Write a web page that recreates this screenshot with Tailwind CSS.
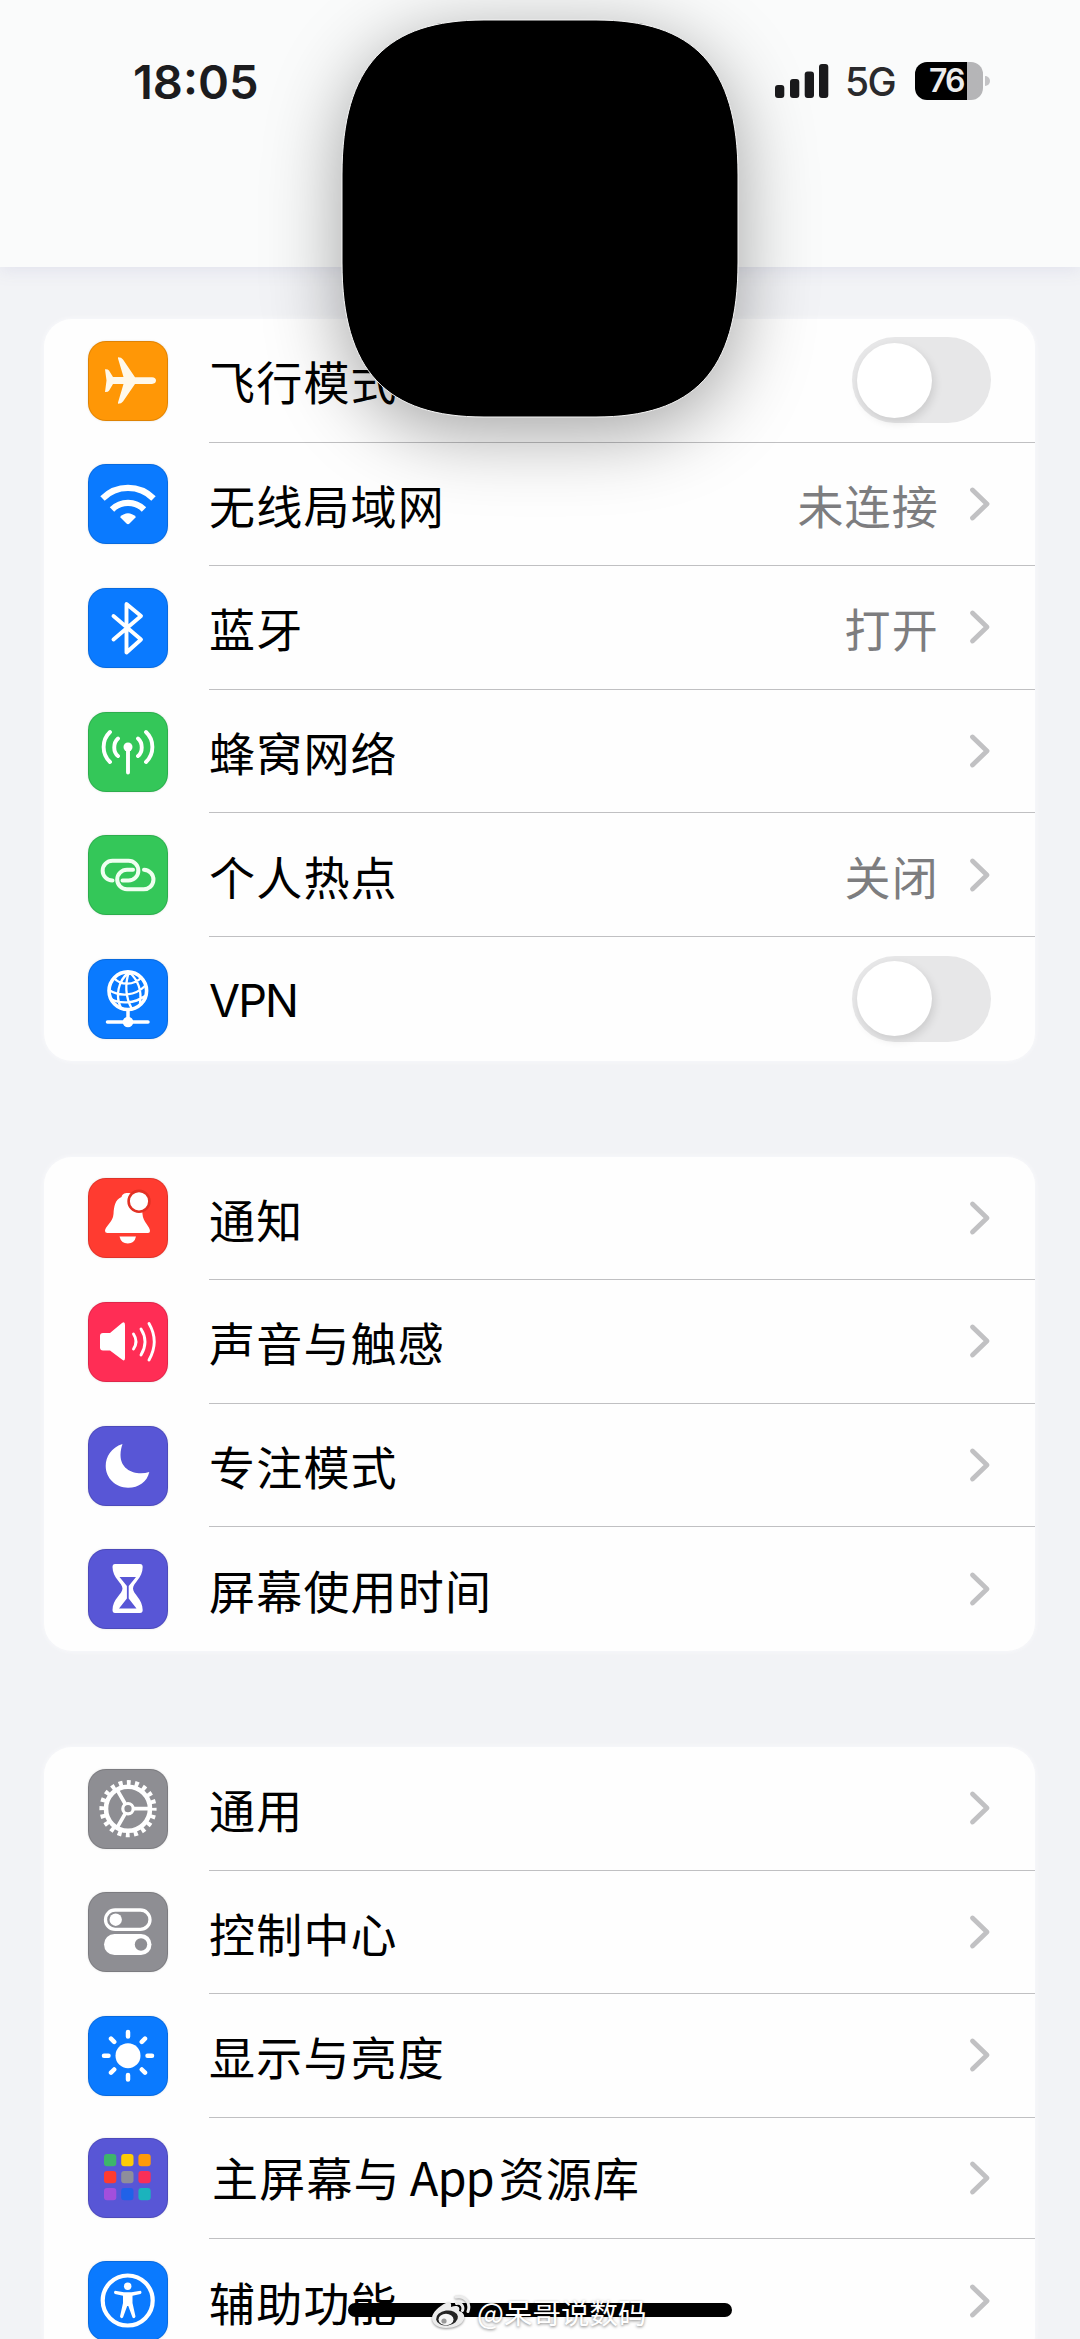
<!DOCTYPE html>
<html lang="zh-CN">
<head>
<meta charset="utf-8">
<title>设置</title>
<script src="https://cdn.jsdelivr.net/npm/@tailwindcss/browser@4"></script>
</head>
<body class="bg-[#f2f3f6]">
<svg class="hidden">
  <symbol id="chev" viewBox="0 0 24 38"><path d="M4.5 5L19 19L4.5 33" fill="none" stroke="#c1c1c3" stroke-width="4.8" stroke-linecap="round" stroke-linejoin="round"/></symbol>
</svg>
<div id="screen" class="relative w-[1080px] h-[2339px] overflow-hidden bg-[#f2f3f6] text-black font-['Inter','Noto_Sans_CJK_SC',sans-serif]">
  <header class="h-[267px] bg-[#fafbfb] shadow-[0_4px_14px_rgba(225,226,236,0.9)]">
    <div class="flex items-center h-[162px] pl-[133px] pr-[90px]">
      <div class="text-[47px] leading-none font-semibold text-[#1c1c1e]">18:05</div>
      <div class="ml-auto flex items-center">
        <svg class="w-[54px] h-[36px]" viewBox="0 0 54 36" fill="#1a1a1c"><rect x="0" y="22" width="9.3" height="13" rx="3"/><rect x="15" y="16" width="9.3" height="19" rx="3"/><rect x="29.7" y="8.500" width="9.3" height="26.500" rx="3"/><rect x="44" y="1" width="9.3" height="34" rx="3"/></svg>
        <div class="ml-[16px] w-[53px] whitespace-nowrap text-[39px] leading-none font-medium tracking-[-1.5px] text-[#2a2a2c]">5G</div>
        <div class="relative ml-[17px] flex h-[38px] w-[68px] items-center rounded-[12px] bg-linear-to-r from-black from-76% to-[#b5b5b7] to-76% pl-[14px] text-[32px] leading-none font-semibold tracking-[-2px] text-[#ececec]">76</div>
        <div class="ml-[2px] h-[10px] w-[5px] rounded-r-full bg-[#c4c4c6]"></div>
      </div>
    </div>
  </header>
  <main id="list" class="mt-[52px] ml-[44px] flex w-[991px] flex-col gap-[96px]"></main>

  <svg class="absolute left-[341px] top-[19px] h-[399px] w-[398px] overflow-visible drop-shadow-[0_16px_38px_rgba(0,0,0,0.36)]" viewBox="-1 -1 398 399"><path d="M0 155C0 45 45 0 142 0H254C351 0 396 45 396 155V242C396 352 351 397 254 397H142C45 397 0 352 0 242Z" stroke="#f4f4f4" stroke-width="1"/></svg>
  <div class="absolute left-[348px] top-[2303px] h-[14px] w-[384px] rounded-full bg-black"></div>
  <div class="absolute left-[431px] top-[2292px] flex items-center whitespace-nowrap text-[28.5px] leading-[40px] text-white [text-shadow:0_1px_3px_rgba(0,0,0,0.5)] font-['Noto_Sans_CJK_SC',sans-serif]">
    <svg class="mr-[6px] h-[38px] w-[40px] drop-shadow-[0_1px_1px_rgba(0,0,0,0.4)]" viewBox="0 0 40 38"><path d="M15 10C18 8 21 9 20 14C25 12 30 13 28 18C32 19 34 22 33 26C31 32 23 35 15 35C7 35 1 31 1 25C1 20 8 13 15 10Z" fill="#ececec"/><ellipse cx="16" cy="25" rx="11" ry="7.500" fill="#222" transform="rotate(-8 16 25)"/><ellipse cx="15" cy="26.500" rx="7.500" ry="5.800" fill="#f4f4f4"/><circle cx="13" cy="28" r="2.600" fill="#999"/><path d="M25.500 10.500C30 9.500 33 13 31.500 17.500M25 4C34 2 40 10 37 18.500" fill="none" stroke="#ececec" stroke-width="3" stroke-linecap="round"/></svg>
    <span>@呆哥说数码</span>
  </div>
</div>
<script>
const W = 'fill="none" stroke="#fff" stroke-linecap="round" stroke-linejoin="round"';
const icons = {
  plane: `<path fill="#fff8ea" d="M64 36.200H47L35 18.500Q33.500 16.300 30 16.300V17.500L35.500 36H25L21 29.500Q20 28 17 28.200L18.500 39.500L17 51Q20 51.200 21 49.700L25 43H35.500L30 61.500V62.700Q33.500 62.700 35 60.500L47 43H64Q68 42.500 68 39.500Q68 36.600 64 36.200Z"/>`,
  wifi: `<path fill="none" stroke="#fff" stroke-width="6.200" d="M14.500 34.500A36 36 0 0 1 65.500 34.500"/><path fill="none" stroke="#fff" stroke-width="6.200" d="M24 45.500A22.500 22.500 0 0 1 56 45.500"/><path fill="#fff" d="M32 53Q40 45.500 48 53L41.500 59.500Q40 61 38.500 59.500Z"/>`,
  bt: `<path ${W} stroke-width="3.900" d="M25.500 28L53 51.500L38.500 64.500V16L53 28L25.500 51.500"/>`,
  cell: `<path ${W} stroke-width="3.900" d="M40 35V60.500M30 26.500C25 31 25 40 30 44M22 20C13.500 28 13.500 42 22 50M50 26.500C55 31 55 40 50 44M58 20C66.500 28 66.500 42 58 50"/><circle cx="40" cy="35" r="4.500" fill="#fff"/>`,
  link: `<path fill="none" stroke="#effff0" stroke-linecap="round" stroke-width="4" d="M24.500 45.500A9.850 9.850 0 0 1 24.500 25.800H40.500A9.850 9.850 0 0 1 40.500 45.500H34.500M45 34.700H39A9.800 9.800 0 0 0 39 54.300H55.300A9.800 9.800 0 0 0 56 34.700"/>`,
  vpn: `<g ${W}><circle cx="39.800" cy="31.700" r="18.800" stroke-width="3.600"/><path stroke-width="2.300" d="M41 13C30 22 27 37 33 49M41 13C37 24 37 38 44 50M41 13C49 20 54 31 52 44M26 19C33 27 46 26 53 19M21 31C32 38 47 37 57 27M23 40C32 45 46 45 57 37"/><path stroke-width="3.500" d="M40 51V60M19.500 63H60"/></g><circle cx="40" cy="63" r="5.300" fill="#fff"/>`,
  bell: `<path fill="#fff" d="M38.500 15C35 15.500 34 17 33.500 19C27 22 26 28 25.500 36C25 44.500 17 48 17 53Q17 55 19.500 55H60Q62 55 62 53C62 48 55 44.500 54.500 36L52 18L41 15ZM31.500 58.500H48Q46.500 65.500 39.800 65.500T31.500 58.500Z"/><circle cx="51" cy="23.300" r="10.400" fill="#fff" stroke="#e23124" stroke-width="2.600"/>`,
  sound: `<path fill="#fff" d="M15 31H22L34 21Q37 19 37 23V56Q37 60 34 57.500L22 48.500H15Q12 48.500 12 45.500V34Q12 31 15 31Z"/><path ${W} stroke-width="2.900" d="M45.500 32Q50.500 39.500 45.500 47M53 27Q61 39.500 53 53M61 21.500Q71.500 39.500 61 58"/>`,
  moon: `<path fill="#fff" d="M34.500 18C23 21.500 17.700 31 17.700 40C17.700 52 27.500 61.700 40 61.700C51 61.700 59 56 61.300 46C49 50 32.500 45 32.500 29C32.500 24.500 33.500 21 34.500 18Z"/>`,
  hour: `<path fill="#fff" d="M27 15H52Q54.700 15 54.700 18C54.700 29 45 34 45 39.500C45 45 54.700 50 54.700 61Q54.700 64 52 64H27Q24.500 64 24.500 61C24.500 50 34.500 45 34.500 39.500C34.500 34 24.500 29 24.500 18Q24.500 15 27 15Z"/><path fill="#5856d6" d="M31.500 28H48L40.700 37V49.500L48.500 59.500H31L38.900 49.500V37Z"/>`,
  gear: `<g fill="none" stroke="#fff"><circle cx="40" cy="39.700" r="22" stroke-width="4.600"/><circle cx="40" cy="39.700" r="26" stroke-width="5.200" stroke-dasharray="3.900 4.268" stroke-dashoffset="1.950"/><circle cx="40" cy="39.700" r="5.200" stroke-width="3.200"/><path stroke-width="3.700" d="M46 39.700H61M37 34.500L29 20.600M37 44.900L29 58.800"/></g>`,
  ctrl: `<rect x="17.500" y="18" width="44.500" height="19.300" rx="9.650" ${W} stroke-width="3.300"/><circle cx="27.700" cy="27.700" r="6.200" fill="#fff"/><rect x="16" y="42" width="47.500" height="21" rx="10.500" fill="#fff"/><circle cx="53" cy="52.500" r="6.200" fill="#8e8e93"/>`,
  sun: `<circle cx="40" cy="39.700" r="12.500" fill="#fff"/><path ${W} stroke-width="4.500" d="M40 16V20.500M40 59V63.500M16 39.700H20.500M59.500 39.700H64M23 22.700L26.200 25.900M57 22.700L53.800 25.900M23 56.700L26.200 53.500M57 56.700L53.800 53.500"/>`,
  apps: ['#3db56b','#fccb06','#ff9a0a','#ff3b30','#8e8e9b','#f92f58','#a34fdc','#2062e8','#1bb3bd'].map((c,i)=>`<rect x="${16+i%3*17.2}" y="${16+Math.floor(i/3)*17}" width="12.300" height="12.300" rx="3" fill="${c}"/>`).join(''),
  acc: `<circle cx="39.700" cy="39.500" r="25" ${W} stroke-width="4.200"/><circle cx="39.700" cy="25.300" r="3.700" fill="#fff"/><path fill="#fff" d="M27 29.800L36 31.200H43.500L52.500 29.800Q54.500 31.500 52.500 33L44.500 34.700V42L47.500 55.500Q46.500 58.500 44.500 56.500L40.300 45H39.200L35 56.500Q33 58.500 32 55.500L35 42V34.700L27 33Q25 31.500 27 29.800Z"/>`
};
const B='bg-[#0a7aff]', G='bg-[#34c759]', I='bg-[#5856d6]', K='bg-[#8e8e93]';
const groups = [
  [['plane','bg-[#ff9706]','飞行模式','toggle'],['wifi',B,'无线局域网','未连接'],['bt',B,'蓝牙','打开'],['cell',G,'蜂窝网络',''],['link',G,'个人热点','关闭'],['vpn',B,'VPN','toggle']],
  [['bell','bg-[#ff3b30]','通知',''],['sound','bg-[#ff2d55]','声音与触感',''],['moon',I,'专注模式',''],['hour',I,'屏幕使用时间','']],
  [['gear',K,'通用',''],['ctrl',K,'控制中心',''],['sun',B,'显示与亮度',''],['apps',I,'主屏幕与 App 资源库',''],['acc',B,'辅助功能','']]
];
const label = t => t === 'VPN'
  ? `<span class="text-[45px] leading-[64px] tracking-[-1.9px] pt-[4px]">VPN</span>`
  : t.includes('App')
  ? `<span class="flex pl-[3px] pb-[4px] text-[46px] leading-[64px] tracking-[1.2px] font-['Noto_Sans_CJK_SC',sans-serif]">主屏幕与<span class="ml-[9px] mr-[5px] text-[47px] tracking-[-1px]">App</span>资源库</span>`
  : `<span class="text-[46px] leading-[64px] tracking-[1.2px] font-['Noto_Sans_CJK_SC',sans-serif]">${t}</span>`;
const tail = v => v === 'toggle'
  ? `<span class="ml-auto mr-[44px] flex h-[86px] w-[139px] items-center rounded-full bg-[#e7e7e8] pl-[5px]"><span class="size-[75px] rounded-full bg-white shadow-[2px_4px_10px_rgba(0,0,0,0.12)]"></span></span>`
  : `<span class="ml-auto mr-[29px] text-[46px] leading-[64px] tracking-[1.2px] text-[#7d7d7f] font-['Noto_Sans_CJK_SC',sans-serif]">${v}</span><svg class="mr-[43px] h-[38px] w-[24px]"><use href="#chev"/></svg>`;
document.getElementById('list').innerHTML = groups.map((g,gi)=>`<section class="rounded-[28px] bg-[#fefefe] shadow-[0_0_5px_#fbfbfd]">${g.map((r,i)=>`
  <div class="flex ${gi===2&&i===3?'h-[121.5px]':'h-[123.6px]'} items-center pl-[44px]">
    <svg class="size-[80px] shrink-0 rounded-[18px] ${r[1]} shadow-[0_0_2px_rgba(0,0,0,0.15)]" viewBox="0 0 80 80">${icons[r[0]]}<rect x="0.500" y="0.500" width="79" height="79" rx="17.500" fill="none" stroke="#000" stroke-opacity="0.130"/></svg>
    <div class="ml-[41px] flex h-full flex-1 items-center ${i<g.length-1?'border-b border-[#c0c0c2]':''}">${label(r[2])}${tail(r[3])}</div>
  </div>`).join('')}</section>`).join('');
</script>
</body>
</html>
